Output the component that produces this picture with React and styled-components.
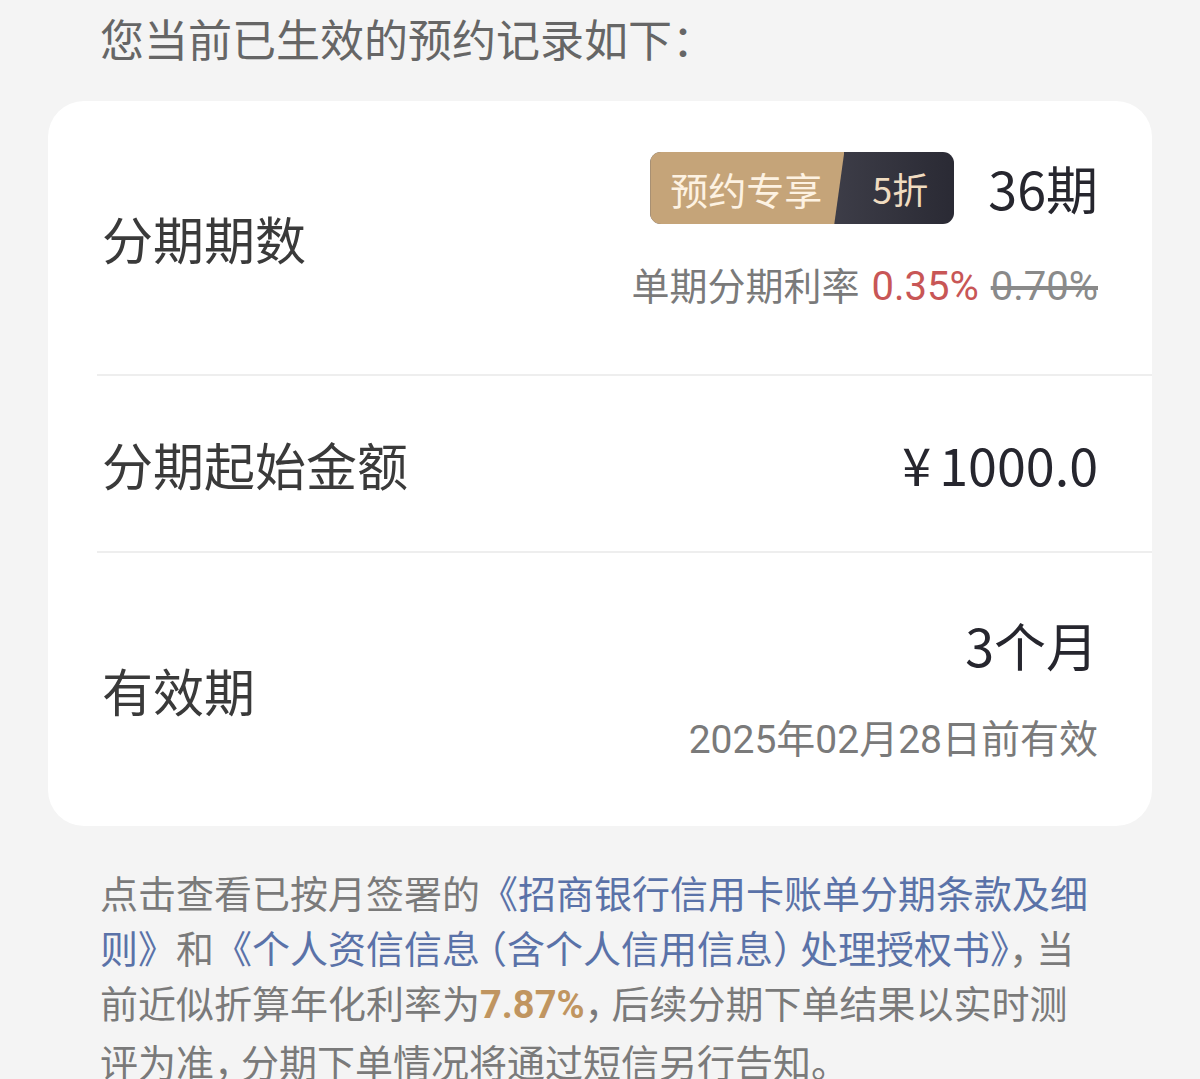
import React from 'react';
import styled, { createGlobalStyle } from 'styled-components';

const GlobalStyle = createGlobalStyle`
  body {
    margin: 0;
    background: #f4f4f4;
    font-family: "Noto Sans CJK SC", "Noto Sans", sans-serif;
  }
`

const Page = styled.div`
  width: 1200px;
  min-height: 1079px;
  background: #f4f4f4;
  overflow: hidden;
`
const Title = styled.div`
  padding: 8px 0 0 100px;
  height: 101px;
  box-sizing: border-box;
  font-size: 44px;
  line-height: 60px;
  color: #666666;
`
const Card = styled.div`
  margin: 0 48px;
  background: #ffffff;
  border-radius: 36px;
  overflow: hidden;
`
const Row = styled.div`
  height: ${p => p.h}px;
  display: flex;
  align-items: center;
  justify-content: space-between;
  padding: 0 54px 0 54px;
`
const Label = styled.div`
  font-size: 51px;
  line-height: 60px;
  color: #3a3a3a;
`
const Right = styled.div`
  display: flex;
  flex-direction: column;
  align-items: flex-end;
  padding-bottom: ${p => p.pb || 0}px;
`
const TopLine = styled.div`
  display: flex;
  align-items: center;
  gap: 34px;
`
const Value = styled.div`
  font-size: 52px;
  line-height: 60px;
  color: #26262e;
`
const Yen = styled.span`
  margin-right: 8px;
`
const Sub = styled.div`
  margin-top: ${p => p.mt}px;
  font-family: Roboto, "Noto Sans CJK SC", sans-serif;
  font-size: ${p => p.size || 38}px;
  line-height: 50px;
  color: #7a7a7a;
`
const Red = styled.span`
  margin: 0 12px;
  font-size: 40px;
  color: #c85656;
`
const Strike = styled.span`
  font-size: 40px;
  color: #8a8a8a;
  text-decoration: line-through;
`
const Badge = styled.div`
  display: flex;
  height: 72px;
  border-radius: 11px;
  overflow: hidden;
  background: linear-gradient(90deg, #5a5a66 0%, #2a2a34 100%);
`
const BadgeGold = styled.div`
  display: flex;
  align-items: center;
  padding: 0 22px 0 20px;
  font-size: 38px;
  color: #fdf2e2;
  background: #c5a479;
  clip-path: polygon(0 0, 100% 0, calc(100% - 10px) 100%, 0 100%);
`
const BadgeDark = styled.div`
  display: flex;
  align-items: center;
  padding: 0 26px 0 28px;
  font-size: 36px;
  color: #f0dcc0;
`
const Divider = styled.div`
  height: 2px;
  margin-left: 49px;
  background: #eeeeee;
`
const Note = styled.p`
  margin: 38px 104px 0 100px;
  font-size: 38px;
  line-height: 55px;
  color: #7a7a7a;
`
const Link = styled.span`
  color: #5a72a8;
`
const Gold = styled.span`
  font-family: Roboto, "Noto Sans CJK SC", sans-serif;
  color: #c09560;
  font-weight: 700;
`
const Comma = styled.span`
  font-feature-settings: "halt";
  margin-right: 8px;
`
const Paren = styled.span`
  font-feature-settings: "halt";
  margin: 0 ${p => (p.open ? '0 0 8px' : '8px 0 0')};
`

const App = () => {
  return (
    <Page>
      <GlobalStyle />
      <Title>您当前已生效的预约记录如下：</Title>
      <Card>
        <Row h={273}>
          <Label>分期期数</Label>
          <Right pb={11}>
            <TopLine>
              <Badge>
                <BadgeGold>预约专享</BadgeGold>
                <BadgeDark>5折</BadgeDark>
              </Badge>
              <Value>36期</Value>
            </TopLine>
            <Sub mt={38}>单期分期利率<Red>0.35%</Red><Strike>0.70%</Strike></Sub>
          </Right>
        </Row>
        <Divider />
        <Row h={175}>
          <Label>分期起始金额</Label>
          <Value><Yen>¥</Yen>1000.0</Value>
        </Row>
        <Divider />
        <Row h={273}>
          <Label>有效期</Label>
          <Right>
            <Value>3个月</Value>
            <Sub mt={40} size={39}>2025年02月28日前有效</Sub>
          </Right>
        </Row>
      </Card>
      <Note>
        点击查看已按月签署的<Link>《招商银行信用卡账单分期条款及细则》</Link>和<Link>《个人资信信息<Paren open>（</Paren>含个人信用信息<Paren>）</Paren>处理授权书》</Link><Comma>，</Comma>当前近似折算年化利率为<Gold>7.87%</Gold><Comma>，</Comma>后续分期下单结果以实时测评为准<Comma>，</Comma>分期下单情况将通过短信另行告知。
      </Note>
    </Page>
  )
}

export default App
